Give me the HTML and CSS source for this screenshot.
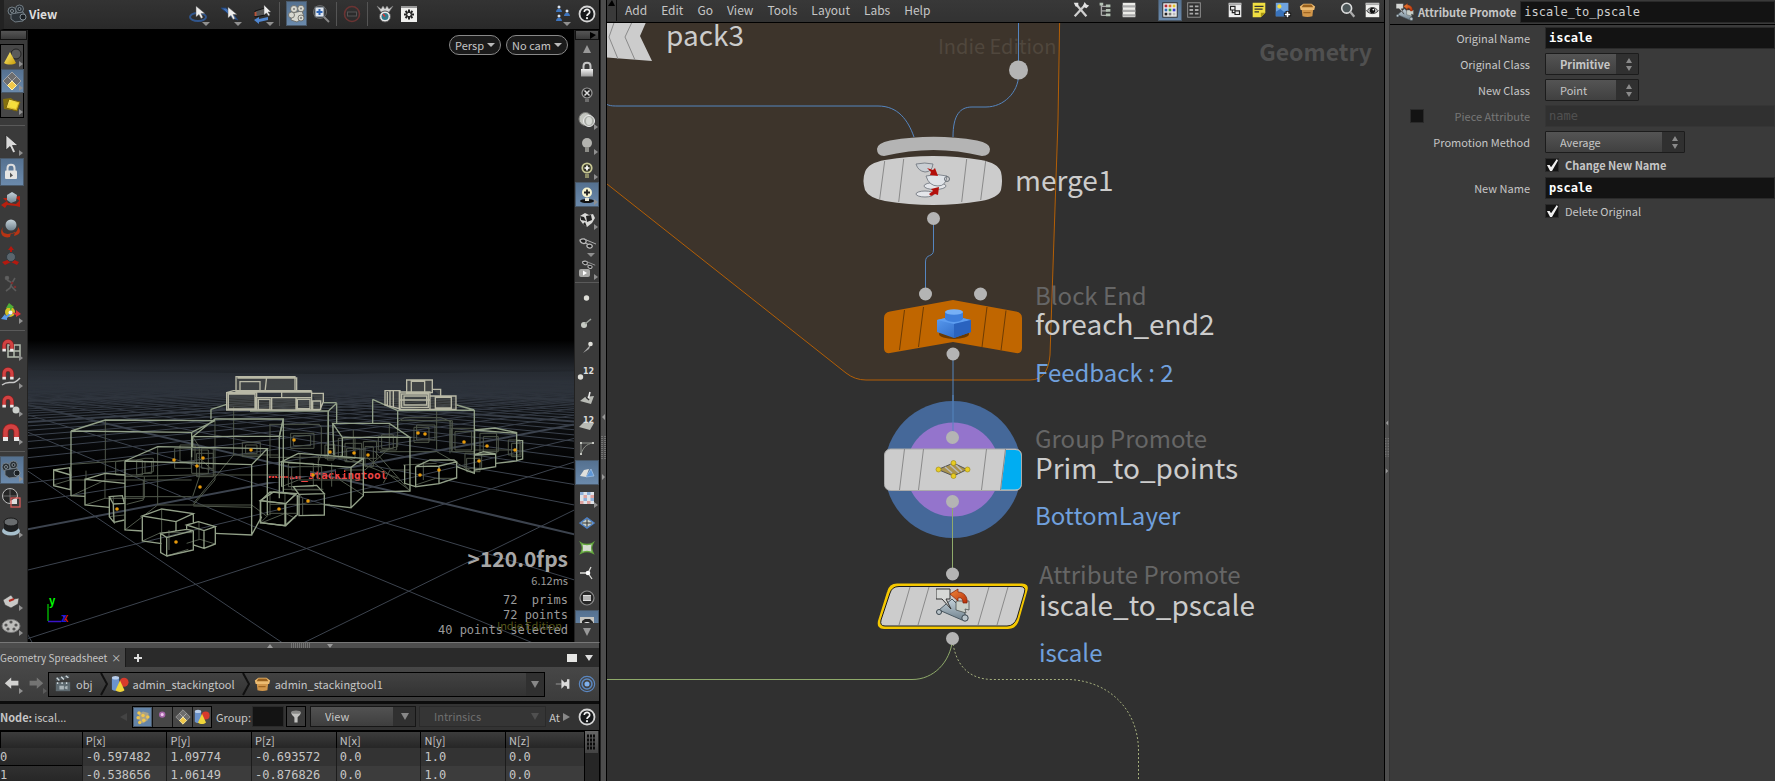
FILE: index.html
```html
<!DOCTYPE html>
<html lang="en">
<head>
<meta charset="utf-8">
<title>Geometry network</title>
<link rel="stylesheet" href="styles.css">
</head>
<body>
<svg class="defs" aria-hidden="true">
  <defs>
    <linearGradient id="gold" x1="0" y1="0" x2="1" y2="1"><stop offset="0" stop-color="#fff27a"/><stop offset="1" stop-color="#c79a08"/></linearGradient>
    <linearGradient id="silver" x1="0" y1="0" x2="0" y2="1"><stop offset="0" stop-color="#f2f2f2"/><stop offset="1" stop-color="#9a9a9a"/></linearGradient>
    <linearGradient id="steel" x1="0" y1="0" x2="0" y2="1"><stop offset="0" stop-color="#c5d2da"/><stop offset="1" stop-color="#70828e"/></linearGradient>
    <linearGradient id="brick" x1="0" y1="0" x2="1" y2="1"><stop offset="0" stop-color="#5b9cf0"/><stop offset="1" stop-color="#2560bd"/></linearGradient>
    <linearGradient id="flame" x1="0" y1="0" x2="1" y2="1"><stop offset="0" stop-color="#f08a3c"/><stop offset="1" stop-color="#b82e08"/></linearGradient>
  </defs>
  <symbol id="i-camera" viewBox="0 0 20 20"><g fill="#2a3137" stroke="#78838b" stroke-width=".9"><circle cx="5" cy="7" r="4"/><circle cx="12.500" cy="5" r="4"/><path d="M4 10l12-2 2 3-2 6-8 1-4-3z"/></g><g fill="#1a1f23" stroke="#98a3ab" stroke-width=".8"><circle cx="5" cy="7" r="1.500"/><circle cx="12.500" cy="5" r="1.500"/><circle cx="16" cy="13" r="3"/></g></symbol>
  <symbol id="i-tumble" viewBox="0 0 20 20"><ellipse cx="10" cy="13" rx="8" ry="4" fill="none" stroke="#31568d" stroke-width="2"/><path d="M8 2v11l3-2.500 2 4 2-1-2-4h4z" fill="#eee" stroke="#555" stroke-width=".5"/></symbol>
  <symbol id="i-pan" viewBox="0 0 20 20"><path d="M1 4l5 0 7 6 5 6-6-2-6-6z" fill="#3f70b8" stroke="#22406e"/><path d="M8 3v11l3-2.500 2 4 2-1-2-4h4z" fill="#eee" stroke="#555" stroke-width=".5"/></symbol>
  <symbol id="i-dolly" viewBox="0 0 20 20"><path d="M3 7l10-3v7l-10 2z" fill="#555" stroke="#111"/><path d="M3.500 8v4" stroke="#b8553a" stroke-width="2"/><path d="M2 16l5-3v2l9-2v3l-9 2v2z" fill="#4f86d0"/><path d="M12 1v10l2.500-2 2 3 1.500-1-2-3h3z" fill="#eee" stroke="#555" stroke-width=".5"/></symbol>
  <symbol id="i-reels" viewBox="0 0 20 20"><g fill="#d8d8d0" stroke="#65655f" stroke-width=".8"><path d="M5 9l10-2 2 6-7 5-6-2z"/><circle cx="7" cy="5" r="3.500"/><circle cx="14" cy="4.500" r="3.300"/><circle cx="4.500" cy="11" r="3"/><circle cx="14" cy="14" r="3"/></g><g fill="#777"><circle cx="7" cy="5" r="1"/><circle cx="14" cy="4.500" r="1"/><circle cx="14" cy="14" r="1"/></g></symbol>
  <symbol id="i-zoombox" viewBox="0 0 20 20"><rect x="4" y="3" width="9" height="10" fill="#dfe6ef" stroke="#56606b"/><path d="M8.500 5v6M5.500 8h6" stroke="#2f66b8" stroke-width="2"/><circle cx="9" cy="8" r="6.500" fill="none" stroke="#777" stroke-width=".8"/><path d="M13 13l5 5" stroke="#888" stroke-width="2"/></symbol>
  <symbol id="i-stop" viewBox="0 0 20 20"><circle cx="10" cy="10" r="7.500" fill="none" stroke="#6b3433" stroke-width="1.600"/><rect x="5.500" y="8" width="9" height="4" fill="#2b2b2b" stroke="#555"/></symbol>
  <symbol id="i-medal" viewBox="0 0 20 20"><path d="M2 2l4 3 2-3 2 3 2-3 2 3 4-3-4 6H6z" fill="#d5d5d5" stroke="#777" stroke-width=".6"/><circle cx="10" cy="12.500" r="5.500" fill="#e8e8e8" stroke="#555"/><circle cx="10" cy="12.500" r="3.500" fill="#347a8a"/><path d="M8 10l2 2.500" stroke="#d33" stroke-width="1.500"/></symbol>
  <symbol id="i-gearbox" viewBox="0 0 20 20"><rect x="2" y="2" width="16" height="16" fill="#f0f0ee"/><path d="M2 3h16" stroke="#999" stroke-width="2"/><path d="M10 5.500v10M5 10.500h10M6.500 7l7 7M13.500 7l-7 7" stroke="#222" stroke-width="2"/><circle cx="10" cy="10.500" r="2.200" fill="#f0f0ee" stroke="#222"/></symbol>
  <symbol id="i-people" viewBox="0 0 20 20"><g fill="#d9e3ef"><circle cx="6" cy="3" r="1.500"/><circle cx="6" cy="12" r="1.500"/><circle cx="14" cy="7" r="1.500"/></g><path d="M3 8c0-4.500 6-4.500 6 0zM3 17c0-4.500 6-4.500 6 0zM11 12c0-4.500 6-4.500 6 0z" fill="#3d74bd"/></symbol>
  <symbol id="i-help" viewBox="0 0 20 20"><circle cx="10" cy="10" r="7.500" fill="#16181a" stroke="#d5d5d5" stroke-width="1.800"/><path d="M7.300 8c0-3.600 5.600-3.400 5.400 0 0 2-2.700 2-2.700 4" fill="none" stroke="#eee" stroke-width="1.700"/><circle cx="10" cy="14.200" r="1.100" fill="#eee"/></symbol>

  <symbol id="i-cone" viewBox="0 0 20 20"><circle cx="14" cy="7" r="5" fill="#5a5a5a" stroke="#222"/><path d="M8 5l6 11c-3 2-9 2-12 0z" fill="url(#gold)"/></symbol>
  <symbol id="i-diamonds" viewBox="0 0 20 20"><g stroke="#b0b0b0" stroke-width=".8" fill="#6d6d6d"><path d="M10 1l4.500 4.500-4.500 4.500-4.500-4.500zM5.500 5.500l4.500 4.500-4.500 4.500L1 10zM14.500 5.500l4.500 4.500-4.500 4.500-4.500-4.500z"/></g><path d="M10 10l4.500 4.500L10 19l-4.500-4.500z" fill="#f0c84a" stroke="#fff3b0"/></symbol>
  <symbol id="i-slab" viewBox="0 0 20 20"><path d="M1 4l8-1 4 4-4 8-7-1z" fill="#84700f"/><path d="M7 4l11 3-3 9-11-3z" fill="url(#gold)" stroke="#7a6405"/><path d="M9 6l7 2-2 6-7-2z" fill="#f5de3c"/></symbol>
  <symbol id="i-arrow" viewBox="0 0 20 20"><path d="M5 1v15l4-3.500 3 6.500 2.500-1.200-3-6.300H17z" fill="#d9d9d9" stroke="#222" stroke-width=".7"/></symbol>
  <symbol id="i-lock" viewBox="0 0 20 20"><path d="M6.500 9V6c0-4.500 7-4.500 7 0v3" fill="none" stroke="#ddd" stroke-width="2"/><rect x="4" y="8.500" width="12" height="8.500" rx="1" fill="#e6e6e4"/><path d="M9 10.500v5l3-2z" fill="#555"/></symbol>
  <symbol id="i-move" viewBox="0 0 20 20"><path d="M0 15l6-4 1 2 8 1 4-4v7l-4-1-9-1-2 3zM2 8h5l-2 3zM13 7l6-1v5z" fill="#b8200f"/><path d="M6 5l5-3 5 3-1 6-5 2-4-3z" fill="url(#steel)"/></symbol>
  <symbol id="i-rotate" viewBox="0 0 20 20"><path d="M2 9c-3 7 5 8 8 6l-1 4c-6 2-12-3-7-10zM17 9c4 5 1 8-4 9l1-4-5 2c4 0 8-2 8-7z" fill="#b83414"/><circle cx="10" cy="7" r="5.500" fill="url(#steel)"/></symbol>
  <symbol id="i-scale" viewBox="0 0 20 20"><path d="M10 0l3 4h-2v9l7 3-2 3-6-3-6 3-3-3 8-3V4H7z" fill="#b3190f"/><circle cx="10" cy="11" r="4.500" fill="#59656d" stroke="#303a40"/></symbol>
  <symbol id="i-pose" viewBox="0 0 20 20"><g stroke="#5c5c5c" stroke-width="1.600" fill="#6a6a6a"><circle cx="6" cy="4" r="1.500"/><path d="M6 6l5 3 3-5M11 9l-2 5-4 3M10 12l5 5" fill="none"/></g><circle cx="11" cy="9" r="1.300" fill="#7c2f2f"/><circle cx="14" cy="13" r="1.300" fill="#7c2f2f"/></symbol>
  <symbol id="i-axes" viewBox="0 0 20 20"><circle cx="9" cy="10" r="5" fill="#d2c024"/><path d="M9 11V6H5l3-5 5 4-2 1z" fill="#4fae36"/><path d="M9 10l6 1V8l5 4-5 3v-2z" fill="#d8343a"/><path d="M10 10l-5 4-1-2-4 5 6 1v-2l5-4z" fill="#5c9ae8"/><circle cx="9.500" cy="10.500" r="2" fill="#f1f1f1"/></symbol>
  <symbol id="i-magnet" viewBox="0 0 20 20"><path d="M4.500 16V9c0-7.500 11-7.500 11 0v7" fill="none" stroke="#8e1c1c" stroke-width="6"/><path d="M4.500 14V9c0-7.500 11-7.500 11 0v5" fill="none" stroke="#d24242" stroke-width="4.500"/><path d="M2 14h5v4H2zM13 14h5v4h-5z" fill="#e9e9e9"/></symbol>
  <symbol id="i-maggrid" viewBox="0 0 20 20"><path d="M7 6h12v12H7zM7 12h12M13 6v12" fill="none" stroke="#b4bcae" stroke-width="1.500"/><use href="#i-magnet" width="14" height="14"/></symbol>
  <symbol id="i-magcurve" viewBox="0 0 20 20"><path d="M1 18c8-6 10 2 18-7" fill="none" stroke="#c8c8c8" stroke-width="1.500"/><use href="#i-magnet" width="14" height="14"/></symbol>
  <symbol id="i-magpoint" viewBox="0 0 20 20"><circle cx="15" cy="15" r="3.500" fill="#ccd0cc"/><use href="#i-magnet" width="14" height="14"/></symbol>
  <symbol id="i-globe" viewBox="0 0 20 20"><circle cx="9" cy="8" r="7.500" fill="#252525" stroke="#bbb"/><path d="M2 8h14M9 1v14" stroke="#888" stroke-width=".7"/><path d="M9 13l7-4v7H9z" fill="#ddd"/><rect x="10" y="10" width="9" height="9" fill="none" stroke="#d85a58" stroke-width="1.300"/></symbol>
  <symbol id="i-cylinder" viewBox="0 0 20 20"><ellipse cx="10" cy="15" rx="9" ry="4.500" fill="#a7bfcc"/><path d="M3 6v7c3 4 11 4 14 0V6z" fill="#1d1f20"/><ellipse cx="10" cy="6" rx="7" ry="4" fill="#686c6e" stroke="#1a1a1a"/></symbol>
  <symbol id="i-brush" viewBox="0 0 20 20"><path d="M2 9l8-5 3 4 5-1-1 6-7 4-6-3z" fill="#c8c8c6" stroke="#333" stroke-width=".6"/><path d="M8 10l5-2" stroke="#b02a20" stroke-width="2"/></symbol>
  <symbol id="i-reel" viewBox="0 0 20 20"><ellipse cx="10" cy="10" rx="9" ry="6.500" fill="#bdbdbb" stroke="#777"/><g fill="#555"><circle cx="10" cy="6" r="1.600"/><circle cx="5" cy="9" r="1.600"/><circle cx="15" cy="9" r="1.600"/><circle cx="7" cy="13" r="1.600"/><circle cx="13" cy="13" r="1.600"/></g></symbol>

  <symbol id="i-padlock" viewBox="0 0 20 20"><path d="M6.500 9V6c0-4.500 7-4.500 7 0v3" fill="none" stroke="#c5c5c5" stroke-width="2"/><rect x="4" y="9" width="12" height="7.500" fill="url(#silver)"/></symbol>
  <symbol id="i-bulboff" viewBox="0 0 20 20"><circle cx="10" cy="8" r="5" fill="#222" stroke="#999" stroke-width="1.200"/><path d="M7.500 5.500l5 5M12.500 5.500l-5 5" stroke="#ddd" stroke-width="1.500"/><path d="M8 14h4v3H8z" fill="#6d6d6d"/></symbol>
  <symbol id="i-discs" viewBox="0 0 20 20"><circle cx="8.500" cy="9" r="6.500" fill="#c3c5bf" stroke="#7e7e7b"/><circle cx="12" cy="11" r="5.500" fill="#a9aca6" stroke="#eee"/><ellipse cx="12" cy="11" rx="3" ry="4" fill="#d5d8d3"/></symbol>
  <symbol id="i-bulb" viewBox="0 0 20 20"><circle cx="10" cy="8" r="5" fill="#b3b3af"/><path d="M8 12h4v5H8z" fill="#8d8d88"/></symbol>
  <symbol id="i-bulbplus" viewBox="0 0 20 20"><circle cx="10" cy="8" r="4.700" fill="#333325" stroke="#c9c995" stroke-width="1.800"/><path d="M10 5.500v5M7.500 8h5" stroke="#fff" stroke-width="1.700"/><path d="M8 14h4v4H8z" fill="#8d8d66"/></symbol>
  <symbol id="i-bulblit" viewBox="0 0 20 20"><ellipse cx="10" cy="16" rx="7" ry="2" fill="#111"/><circle cx="10" cy="7.500" r="5" fill="#f6f3cf"/><path d="M10 4.500v6M7 7.500h6" stroke="#222" stroke-width="1.800"/><path d="M8 13h4v3H8z" fill="#e8e8d8"/></symbol>
  <symbol id="i-checks" viewBox="0 0 20 20"><path d="M3 6l5-3 4 2 4-1 2 4-3 5-5 4-4-3-3-4z" fill="#d9d9d7"/><path d="M3 6l4 1 2 4-5-1zM9 6l5-1 1 5-5 2zM8 12l2 5-4-3z" fill="#222"/></symbol>
  <symbol id="i-glasses" viewBox="0 0 20 20"><path d="M3 5c3-2 7-1 6 2s-6 1-6-2zM10 10c3-2 6 0 5 2s-6 1-5-2z" fill="#1d1d1d" stroke="#bdbdbd" stroke-width="1.300"/><path d="M7 4l12 5M8 8l3 1" stroke="#aaa"/></symbol>
  <symbol id="i-playglasses" viewBox="0 0 20 20"><use href="#i-glasses" x="3" y="-2" width="16" height="16"/><rect x="2" y="9" width="11" height="8" rx="2" fill="#a8a8a6"/><path d="M6 10.500v5l4-2.500z" fill="#fff"/></symbol>
  <symbol id="i-dot" viewBox="0 0 20 20"><circle cx="9.500" cy="10" r="2.700" fill="#deded8"/></symbol>
  <symbol id="i-normal" viewBox="0 0 20 20"><circle cx="7" cy="12" r="3" fill="#c7cbc4"/><path d="M8 11l6-5" stroke="#9aa09a" stroke-width="1.600"/></symbol>
  <symbol id="i-trail" viewBox="0 0 20 20"><path d="M14 6l-8 9 6-4z" fill="#aaa"/><circle cx="13.500" cy="6" r="2.300" fill="#e1e1db"/></symbol>
  <symbol id="i-poly" viewBox="0 0 20 20"><path d="M3 13l5-4 9-1-3 8z" fill="#b9bbb5"/><path d="M11 12l2-8" stroke="#eee" stroke-width="1.500"/><path d="M9 9l3 3" stroke="#333" stroke-width="1.500"/></symbol>
  <symbol id="i-corner" viewBox="0 0 20 20"><path d="M4 16V5h12M4 16C6 10 9 6 16 5" fill="none" stroke="#8f938c"/><path d="M3 4h2v2H3zM15 4h2v2h-2zM3 15h2v2H3z" fill="#c5c7c1"/></symbol>
  <symbol id="i-planes" viewBox="0 0 20 20"><path d="M3 13l4-6 5-1-3 8z" fill="#e0e0dc"/><path d="M9 14l5-8 3 7z" fill="#5e97d8" stroke="#b5d0ee" stroke-width=".6"/></symbol>
  <symbol id="i-checker" viewBox="0 0 20 20"><rect x="3" y="4" width="14" height="12" fill="#dfe3e8"/><path d="M3 4h3.500v3H3zM10 4h3.500v3H10zM6.500 10H10v3H6.500zM13.500 10H17v3h-3.500z" fill="#8fb0d8"/><path d="M6.500 7H10v3H6.500zM13.500 7H17v3h-3.500zM3 13h3.500v3H3zM10 13h3.500v3H10z" fill="#dfa3a0"/></symbol>
  <symbol id="i-plane" viewBox="0 0 20 20"><path d="M3 10l7-5 7 5-7 5z" fill="#c5cec8" stroke="#4d7fc2" stroke-width="1.500"/><path d="M10 6v8M5 10h10" stroke="#333"/></symbol>
  <symbol id="i-wrap" viewBox="0 0 20 20"><path d="M4 5c3 2 9 2 12 0-2 4-2 6 0 10-4-2-8-2-12 0 2-4 2-6 0-10z" fill="#d5dccf" stroke="#64a83e" stroke-width="1.500"/></symbol>
  <symbol id="i-tri" viewBox="0 0 20 20"><path d="M11 10l3-6M11 10H3M11 10l4 6" stroke="#dcdcd8" stroke-width="1.300"/><circle cx="11" cy="10" r="2.300" fill="#fff"/></symbol>
  <symbol id="i-list" viewBox="0 0 20 20"><circle cx="10" cy="10" r="7" fill="#262626" stroke="#8a8a8a" stroke-width="1.200"/><path d="M6 7h8v6H6z" fill="#ddd"/><path d="M6 9h8M6 11h8" stroke="#777" stroke-width=".8"/></symbol>
  <symbol id="i-display" viewBox="0 0 20 20"><rect x="3" y="4" width="14" height="13" fill="#c5c5c1"/><path d="M5 8l3-2h5l3 3v8H5z" fill="#252525"/><circle cx="10" cy="13" r="4" fill="#eee"/></symbol>

  <symbol id="i-tools" viewBox="0 0 20 20"><path d="M3 17L15 4M4 3l12 14" stroke="#cfcfcf" stroke-width="2.500"/><path d="M2 2h5v4H4zM14 1l2 3 3 1-3 3-4-2z" fill="#e2e2e2"/></symbol>
  <symbol id="i-tree" viewBox="0 0 20 20"><path d="M6 4v12M6 6h7M6 11h7M6 16h7" stroke="#aaa" stroke-width="1.500"/><path d="M4 2h4v3H4zM11 4h5v3h-5zM11 9h5v3h-5zM11 14h5v3h-5z" fill="#b4c2b4"/></symbol>
  <symbol id="i-sheet" viewBox="0 0 20 20"><rect x="3" y="2" width="14" height="16" fill="#ecece8"/><path d="M3 6h14M3 11h14M3 16h14" stroke="#aaa" stroke-width="2.500"/></symbol>
  <symbol id="i-palette" viewBox="0 0 20 20"><rect x="2" y="2" width="16" height="16" fill="#eee" stroke="#222"/><path d="M4 4h3v3H4z" fill="#b3283a"/><path d="M8.500 4h3v3h-3z" fill="#d96d28"/><path d="M13 4h3v3h-3z" fill="#e0c62c"/><path d="M4 8.500h3v3H4z" fill="#3169b4"/><path d="M8.500 8.500h3v3h-3z" fill="#3c9a3f"/><path d="M13 8.500h3v3h-3z" fill="#3a3ad0"/><path d="M4 13h3v3H4z" fill="#222"/><path d="M8.500 13h3v3h-3z" fill="#777"/><path d="M13 13h3v3h-3z" fill="#bbb"/></symbol>
  <symbol id="i-nodes" viewBox="0 0 20 20"><rect x="3" y="2" width="14" height="16" fill="#303030" stroke="#999"/><path d="M5 5h4v2H5zM11 5h4v2h-4zM5 9h4v2H5zM11 9h4v2h-4zM5 13h4v2H5zM11 13h4v2h-4z" fill="#aaa"/></symbol>
  <symbol id="i-netbox" viewBox="0 0 20 20"><rect x="3" y="2" width="14" height="16" fill="#eee"/><path d="M3 3.500h14" stroke="#aaa" stroke-width="2"/><path d="M5 6h5v4H5zM10 11h5v4h-5zM7 10v3h3" fill="none" stroke="#222" stroke-width="1.300"/></symbol>
  <symbol id="i-note" viewBox="0 0 20 20"><path d="M3 2h14v11l-5 5H3z" fill="#f0df42"/><path d="M12 18v-5h5z" fill="#a89512"/><path d="M5 6h10M5 9h9M5 12h5" stroke="#333" stroke-width="1.400"/></symbol>
  <symbol id="i-image" viewBox="0 0 20 20"><rect x="2" y="2" width="14" height="15" fill="#6fa4e0"/><path d="M2 17v-5l5-3 4 3 5-2v7z" fill="#3973bb"/><circle cx="6" cy="6" r="2.300" fill="#f2da42"/><path d="M15 11v8M11 15h8" stroke="#111" stroke-width="4"/><path d="M15 12v6M12 15h6" stroke="#fff" stroke-width="1.800"/></symbol>
  <symbol id="i-box" viewBox="0 0 20 20"><path d="M4 8h13l-1 9c-3 1-8 1-11 0z" fill="#d1964a"/><path d="M2 6l4-3h9l4 3-1 4H3z" fill="#edbc72"/><path d="M6 4h9l2 3H4z" fill="#98601d"/><path d="M6 13h8" stroke="#8b5414"/></symbol>
  <symbol id="i-search" viewBox="0 0 20 20"><circle cx="8.500" cy="8" r="5.500" fill="#4d5759" stroke="#ddd" stroke-width="1.800"/><path d="M12.500 12l4.500 5.500" stroke="#aaa" stroke-width="2.500"/></symbol>
  <symbol id="i-eye" viewBox="0 0 20 20"><rect x="3" y="2" width="15" height="16" fill="#f1f1ef"/><path d="M3 3.500h15" stroke="#aaa" stroke-width="2"/><path d="M4 11c4-5 9-5 13 0-4 4-9 4-13 0z" fill="#bbb" stroke="#333"/><circle cx="10.500" cy="10.500" r="3" fill="#111"/><circle cx="11.500" cy="9.500" r="1" fill="#fff"/></symbol>

  <symbol id="i-clapper" viewBox="0 0 20 20"><path d="M2 7l15-4V0L2 3z" fill="#4c565b"/><path d="M2 8h16v10H2z" fill="#5d696f"/><path d="M3 3l3 3M8 2l3 3M13 1l3 2M4 8v2M9 8v2M14 8v2" stroke="#d0d8dc" stroke-width="1.500"/><path d="M6 12h5v4H6zM12 13l3-1v4l-3-1z" fill="#aab4b8"/></symbol>
  <symbol id="i-shapes" viewBox="0 0 20 20"><path d="M1 3h8v13c-2 2-6 2-8 0z" fill="#6b93cc"/><ellipse cx="5" cy="3" rx="4" ry="2" fill="#b8cdea"/><circle cx="14.500" cy="8" r="5" fill="#d83a2c"/><path d="M10 6l5 11c-3 2.500-7 2.500-10 0z" fill="#f0d63a"/></symbol>
  <symbol id="i-back" viewBox="0 0 20 20"><path d="M1 9l8-7v4h9v6H9v4z" fill="#d2d2d0"/></symbol>
  <symbol id="i-pin" viewBox="0 0 20 20"><path d="M1 10h7" stroke="#888" stroke-width="1.500"/><path d="M8 4l4 4 3-1V4h3v12h-3v-3l-3-1-4 4z" fill="#dcdcdc"/></symbol>
  <symbol id="i-target" viewBox="0 0 20 20"><g fill="none" stroke="#5b87c0"><circle cx="10" cy="10" r="8.500" stroke-width="1.300"/><circle cx="10" cy="10" r="5.500" stroke-width="1.700"/></g><circle cx="10" cy="10" r="2.800" fill="#7fb0ec"/></symbol>
  <symbol id="i-points" viewBox="0 0 20 20"><path d="M5 6l5-3 7 2-1 9-6 4-5-4z" fill="#aaa289"/><g fill="#f1c64c"><circle cx="5" cy="5" r="2.200"/><circle cx="10" cy="8" r="2.200"/><circle cx="4" cy="11" r="2.200"/><circle cx="11" cy="14" r="2.200"/><circle cx="6" cy="17" r="2.200"/><circle cx="16" cy="10" r="2.200"/></g></symbol>
  <symbol id="i-vertex" viewBox="0 0 20 20"><circle cx="9" cy="7" r="3" fill="#efc8ee" stroke="#a464a8" stroke-width="2"/></symbol>
  <symbol id="i-funnel" viewBox="0 0 20 20"><path d="M4 4h12c0 4-4 5-4 7v6H8v-6c0-2-4-3-4-7z" fill="#c1c1bf"/><ellipse cx="10" cy="4" rx="6" ry="2" fill="#8a8a88"/></symbol>

  <symbol id="i-promote" viewBox="0 0 34 34"><path d="M3 22l13-11 12 12 2 6-4 3z" fill="url(#steel)" stroke="#4a5861"/><path d="M0 1h14v10h-4l5 10-9-10H0z" fill="#d6d8d6" stroke="#333"/><path d="M20 13h13v9l-4-1 1 4-10-3z" fill="#c9cfc9" stroke="#4c5250" stroke-width=".8"/><path d="M14 6l8-5v3c6 0 10 5 9 11h-4c0-4-2-6-5-5v3z" fill="url(#flame)" stroke="#7b1c05" stroke-width=".7"/><g fill="#b9c4ca" stroke="#3a464e"><circle cx="3" cy="24" r="2.500"/><circle cx="29" cy="30" r="3.200"/></g></symbol>
</svg>

<div class="workspace">
  <main class="left-pane">
    <header class="view-bar">
      <div class="brand"><svg class="ico"><use href="#i-camera"/></svg><h1>View</h1></div>
      <button class="tool wide more-down" aria-label="Tumble"><svg class="ico"><use href="#i-tumble"/></svg></button>
      <button class="tool wide more-down" aria-label="Pan"><svg class="ico"><use href="#i-pan"/></svg></button>
      <button class="tool wide more-down" aria-label="Dolly"><svg class="ico"><use href="#i-dolly"/></svg></button>
      <i class="vsep"></i>
      <button class="tool active" aria-label="Camera"><svg class="ico"><use href="#i-reels"/></svg></button>
      <button class="tool" aria-label="Zoom box"><svg class="ico"><use href="#i-zoombox"/></svg></button>
      <i class="vsep"></i>
      <button class="tool" aria-label="Stop"><svg class="ico"><use href="#i-stop"/></svg></button>
      <i class="vsep"></i>
      <button class="tool narrow first" aria-label="Snapshot"><svg class="ico"><use href="#i-medal"/></svg></button>
      <button class="tool narrow" aria-label="Options"><svg class="ico"><use href="#i-gearbox"/></svg></button>
      <div class="grow"></div>
      <button class="tool narrow more-down" aria-label="Links"><svg class="ico"><use href="#i-people"/></svg></button>
      <button class="tool narrow" aria-label="Help"><svg class="ico"><use href="#i-help"/></svg></button>
    </header>

    <section class="scene">
      <nav class="tools tools-left" aria-label="Tools">
        <div class="grip"></div>
        <div class="stack">
          <button class="tool more" aria-label="Objects"><svg class="ico"><use href="#i-cone"/></svg></button>
          <button class="tool more active" aria-label="Components"><svg class="ico"><use href="#i-diamonds"/></svg></button>
          <button class="tool more" aria-label="Geometry"><svg class="ico"><use href="#i-slab"/></svg></button>
        </div>
        <hr>
        <button class="tool more" aria-label="Select"><svg class="ico"><use href="#i-arrow"/></svg></button>
        <button class="tool active" aria-label="Secure selection"><svg class="ico"><use href="#i-lock"/></svg></button>
        <button class="tool" aria-label="Move"><svg class="ico"><use href="#i-move"/></svg></button>
        <button class="tool" aria-label="Rotate"><svg class="ico"><use href="#i-rotate"/></svg></button>
        <button class="tool" aria-label="Scale"><svg class="ico"><use href="#i-scale"/></svg></button>
        <button class="tool" aria-label="Pose"><svg class="ico"><use href="#i-pose"/></svg></button>
        <button class="tool more" aria-label="Handles"><svg class="ico"><use href="#i-axes"/></svg></button>
        <hr>
        <button class="tool more" aria-label="Snap to grid"><svg class="ico"><use href="#i-maggrid"/></svg></button>
        <button class="tool more" aria-label="Snap to curve"><svg class="ico"><use href="#i-magcurve"/></svg></button>
        <button class="tool more" aria-label="Snap to point"><svg class="ico"><use href="#i-magpoint"/></svg></button>
        <button class="tool more" aria-label="Snap"><svg class="ico"><use href="#i-magnet"/></svg></button>
        <hr>
        <button class="tool more active" aria-label="View tool"><svg class="ico"><use href="#i-camera"/></svg></button>
        <button class="tool" aria-label="Render region"><svg class="ico"><use href="#i-globe"/></svg></button>
        <button class="tool more" aria-label="Lens"><svg class="ico"><use href="#i-cylinder"/></svg></button>
        <div class="grow"></div>
        <button class="tool more short" aria-label="Flipbook"><svg class="ico"><use href="#i-brush"/></svg></button>
        <button class="tool more short" aria-label="Render"><svg class="ico"><use href="#i-reel"/></svg></button>
      </nav>

      <div class="viewport">
        <svg class="canvas" role="img" aria-label="Wireframe scene">
          <defs>
            <linearGradient id="haze" x1="0" y1="0" x2="0" y2="1"><stop offset="0" stop-color="#000"/><stop offset=".22" stop-color="#23272d"/><stop offset=".4" stop-color="#15181c"/><stop offset="1" stop-color="#000"/></linearGradient>
            <linearGradient id="fade" gradientUnits="userSpaceOnUse" x1="0" y1="340" x2="0" y2="640"><stop offset=".09" stop-color="#111"/><stop offset=".14" stop-color="#888"/><stop offset=".3" stop-color="#fff"/></linearGradient>
            <mask id="fademask" maskUnits="userSpaceOnUse" x="0" y="340" width="3000" height="2000"><rect x="0" y="340" width="3000" height="2000" fill="url(#fade)"/></mask>
          </defs>
          <g transform="translate(-28 -30)">
            <rect class="haze" x="0" y="340" width="3000" height="130"/>
            <g mask="url(#fademask)"><path id="floor" class="floor"/><path id="floor-major" class="floor major"/></g>
            <text class="tag mono" x="268" y="479">admin_stackingtool</text>
            <path d="M266 468h44v8h-44zM266 478h24v4h-24zM336 469h8v5h-8z"/>
            <g class="inner" transform="translate(45 370) scale(.3333)">
              <path d="M181 150V330M78 378L181 330H440M566 110V255L445 400M566 255H700M510 148V330L445 405M338 230V405L240 480M338 405H620L667 440M240 320L440 315H706M445 408L620 412M78 283L240 272M440 380H240"/>
              <path d="M212 275l30-5h50v45h-80zM275 270l25-5h25v40l-50 10zM300 275h20v35h-20zM389 235h50v60h-50zM405 225h45v50h-45zM440 240h50v70h-50zM455 250h50v70h-50zM470 235h35v60h-35zM592 217h54v43h-54zM602 225h34v26h-34zM443 200l20 30v90l-20 60M460 262l45 40"/>
              <path d="M295 330v60l-50 13M120 405l60-20h115M180 310v75M298 320v65M25 345l50-15h48v-28M74 293v38M292 513l55-25h95M350 417v70M365 558l65-20M372 480v60M425 520l40-12 46 14M462 455v55M193 440l45-5M205 378v60M646 460l75-30 30 15M720 366v65"/>
            </g>
            <g class="inner" transform="translate(250 370) scale(.3333)">
              <path d="M58 163h150l6 10v80l-10 25M60 163v100M122 190h70v45h-70zM130 197h52v30h-52zM233 125v130M58 262h250M250 160v95M418 160v75L345 300h-60M310 180v60M443 125v105L390 245H560L672 308M560 122v118M675 240h120M600 180v50"/>
              <path d="M443 155l20-12h110l30 12v78M452 152h155v90M492 172h45v45h-45zM500 165h55v45h-55zM605 175h70v70h-70zM615 185h50v55h-50zM600 150v100M690 190h50v60h-50zM700 200h45v45h-45zM775 210h35v45h-35zM785 220h28v40h-28z"/>
              <path d="M265 205h50v60h-50zM285 220h50v55h-50zM290 235h40v40h-40zM340 215h40v50h-40zM345 230h25v60h-25zM385 200h55v40h-55zM395 195h35v40h-35zM225 225h30v40h-30zM232 235h20v35h-20zM375 245l105 118M350 262l130 100M270 255l175 70M480 300h-60l-20 40"/>
              <path d="M115 280h75v70h-75zM125 290h90v70h-90zM95 350l50-20h195M150 250v80M205 258v70M340 375l-70-45M100 358h120M245 280v70M460 285l100-5M497 345l60-20h64M520 275v55M645 250h50v45h-50zM650 265h40v40h-40zM60 403h180M128 350l30 35v50M30 460l30-30h80M60 366v70"/>
            </g>
            <g class="wire" transform="translate(45 370) scale(.3333)">
              <path d="M78 183L181 150L510 152L440 187ZM78 183V377L120 379M440 187V262M443 200L510 147H715L703 199ZM443 200V235M703 199V385M715 147V370M240 273L338 230L667 236L620 284ZM240 273V480L292 483M620 284V495L510 490M667 236V435M620 495L650 440M498 118V148M498 118L545 103"/>
              <path d="M26 300L74 293L77 315L26 300V347L76 359V315M120 328L180 310L240 315M240 340L120 328V405L193 412M193 380L232 377L238 400L205 402ZM193 380V440L207 457L205 402M207 457L238 450"/>
              <path d="M292 438L350 417L445 431L393 455ZM292 438V513L350 521M393 455V485M445 431V460M347 490L425 478L445 482L365 503ZM347 490V548L365 558V503M365 558L445 540V482M425 465L460 455L511 470L477 482ZM425 465V478M477 482V535L445 525M511 470V522L477 535M646 392L686 366L752 373L722 401ZM646 392V458L720 467V401M720 467L755 435"/>
            </g>
            <g class="wire" transform="translate(250 370) scale(.3333)">
              <path d="M95 200H88L100 147M0 123H235L260 100M235 123V255M260 100V160M220 98H260M248 160H418L480 202H277ZM277 202V260M480 202V363L340 367M248 160L252 255M368 88L443 122L673 120L620 105M368 88V160M443 122V180M673 120V310L620 290"/>
              <path d="M95 275L145 250L340 265L303 292ZM95 275V350M303 292V413L223 404M340 265V377L303 413M32 392L60 366L140 371L107 401ZM32 392V458L107 467V401M107 467L142 434V375M130 350L200 346L223 371L147 373ZM147 373V437L223 435V371"/>
              <path d="M497 290L540 270H612L620 276L567 288ZM497 290V350L567 341V288M567 341L620 323V276M673 180L735 174L800 188V273L738 280M673 180L800 190M673 255L737 252L700 245ZM737 252V290L675 300M800 212H818V267L800 272M464 285V340L497 350"/>
            </g>
            <g class="wire top" transform="translate(250 370) scale(.3333)">
              <path d="M-42 20H50L45 66H-42ZM-38 24H140V66M50 20H135V66H45ZM-70 68H20V120H-70ZM-65 72H15V117H-65ZM-70 68L-50 62H185M18 83H65V120H18ZM25 88H60V118H25ZM65 83H138V120H65ZM95 66V83H185V66ZM138 83H185V120H138ZM142 88H180V116H142ZM185 70H220V95L210 120M188 93H212V118H188ZM-30 35H30V64H-30ZM-70 120H210"/>
              <path d="M470 30H547V68H470ZM484 34H524V68H484ZM405 62H450V117L405 105ZM412 66V108M420 62V112M430 62V114M448 66H540V118H448ZM455 72H535V112H455ZM462 78H530V105H462ZM540 78H618V118H540ZM556 82H604V114H556ZM548 58H572V78M448 90H540"/>
            </g>
            <g class="selected" id="selected"></g>
            <path d="M48 621v-17" stroke="#0f0"/><path d="M48 621.500h13" stroke="#3a14c8" stroke-width="1.500"/>
            <text class="axis" x="49" y="605" fill="#0f0">y</text><text class="axis" x="62" y="622" fill="#e01818">x</text><text class="axis" x="61" y="622" fill="#1818d8">z</text>
          </g>
        </svg>
        <div class="cams">
          <button class="pill">Persp<span class="caret"></span></button>
          <button class="pill">No cam<span class="caret"></span></button>
        </div>
        <div class="stats">
          <strong>&gt;120.0fps</strong>
          <span>6.12ms</span>
          <pre class="mono">72  prims
72 points
40 points selected</pre>
          <em>Indie Edition</em>
        </div>
      </div>

      <nav class="tools tools-right" aria-label="Display options">
        <div class="grip"><svg class="tri"><path d="M2 1v7l6-4z"/></svg></div>
        <button class="scroll" aria-label="Scroll up"><svg class="tri"><path d="M1 9L5 1L9 9z"/></svg></button>
        <button class="tool" aria-label="Lock"><svg class="ico"><use href="#i-padlock"/></svg></button>
        <button class="tool" aria-label="No lights"><svg class="ico"><use href="#i-bulboff"/></svg></button>
        <button class="tool more" aria-label="Headlight"><svg class="ico"><use href="#i-discs"/></svg></button>
        <button class="tool more" aria-label="Normal lights"><svg class="ico"><use href="#i-bulb"/></svg></button>
        <button class="tool more" aria-label="High quality"><svg class="ico"><use href="#i-bulbplus"/></svg></button>
        <button class="tool more active" aria-label="Shadows"><svg class="ico"><use href="#i-bulblit"/></svg></button>
        <button class="tool more" aria-label="Materials"><svg class="ico"><use href="#i-checks"/></svg></button>
        <button class="tool more-down" aria-label="Visibility"><svg class="ico"><use href="#i-glasses"/></svg></button>
        <button class="tool more" aria-label="Playback"><svg class="ico"><use href="#i-playglasses"/></svg></button>
        <hr>
        <button class="tool" aria-label="Points"><svg class="ico"><use href="#i-dot"/></svg></button>
        <button class="tool" aria-label="Point normals"><svg class="ico"><use href="#i-normal"/></svg></button>
        <button class="tool" aria-label="Point trails"><svg class="ico"><use href="#i-trail"/></svg></button>
        <button class="tool" aria-label="Point numbers"><svg class="ico"><use href="#i-dot" x="-6" y="4" width="20" height="20"/><text x="6" y="11">12</text></svg></button>
        <button class="tool" aria-label="Primitive normals"><svg class="ico"><use href="#i-poly"/></svg></button>
        <button class="tool" aria-label="Primitive numbers"><svg class="ico"><path d="M2 14l5-5 10 1-4 7z" fill="#b9bbb5"/><text x="6" y="10">12</text></svg></button>
        <button class="tool" aria-label="Hulls"><svg class="ico"><use href="#i-corner"/></svg></button>
        <button class="tool active" aria-label="Shading"><svg class="ico"><use href="#i-planes"/></svg></button>
        <button class="tool more" aria-label="Texture"><svg class="ico"><use href="#i-checker"/></svg></button>
        <button class="tool" aria-label="Grid"><svg class="ico"><use href="#i-plane"/></svg></button>
        <button class="tool" aria-label="Group"><svg class="ico"><use href="#i-wrap"/></svg></button>
        <button class="tool" aria-label="Vectors"><svg class="ico"><use href="#i-tri"/></svg></button>
        <button class="tool" aria-label="List"><svg class="ico"><use href="#i-list"/></svg></button>
        <div class="clip"><button class="tool active" aria-label="Display"><svg class="ico"><use href="#i-display"/></svg></button></div>
        <button class="scroll" aria-label="Scroll down"><svg class="tri"><path d="M1 1L5 9L9 1z"/></svg></button>
      </nav>
    </section>

    <div class="hsplit"><svg viewBox="0 0 70 6"><path d="M2 5l3-4 3 4zM62 1l3 4 3-4z"/><path class="dots" d="M26 1h20M26 3h20M26 5h20"/></svg></div>

    <section class="sheet">
      <div class="tabs">
        <button class="tab">Geometry Spreadsheet<span>×</span></button>
        <button class="plus" aria-label="New tab"><svg><path d="M5 1v8M1 5h8"/></svg></button>
        <div class="grow"></div>
        <svg class="winctl"><path d="M1 3h10v8H1z" fill="#e6e6e4"/><path d="M19 4h8l-4 6z" fill="#ddd"/></svg>
      </div>
      <div class="pathbar">
        <button class="tool narrow more" aria-label="Back"><svg class="ico"><use href="#i-back"/></svg></button>
        <button class="tool narrow more dim" aria-label="Forward"><svg class="ico flip"><use href="#i-back"/></svg></button>
        <div class="path">
          <a href="#obj"><svg class="ico"><use href="#i-clapper"/></svg>obj</a>
          <svg class="chev"><path d="M1 0l6 11-6 11"/></svg>
          <a href="#tool"><svg class="ico"><use href="#i-shapes"/></svg>admin_stackingtool</a>
          <svg class="chev"><path d="M1 0l6 11-6 11"/></svg>
          <a href="#tool1"><svg class="ico"><use href="#i-box"/></svg>admin_stackingtool1</a>
          <div class="grow"></div>
          <button class="drop" aria-label="Recent paths"><span class="caret"></span></button>
        </div>
        <button class="tool narrow" aria-label="Pin"><svg class="ico"><use href="#i-pin"/></svg></button>
        <button class="tool narrow" aria-label="Follow"><svg class="ico"><use href="#i-target"/></svg></button>
      </div>
      <div class="filter">
        <div class="node"><b>Node:</b>iscal...</div>
        <svg class="prev"><path d="M8 1v8L1 5z"/></svg>
        <div class="modes">
          <button class="tool active" aria-label="Points"><svg class="ico"><use href="#i-points"/></svg></button>
          <button class="tool" aria-label="Vertices"><svg class="ico"><use href="#i-vertex"/></svg></button>
          <button class="tool" aria-label="Primitives"><svg class="ico"><use href="#i-diamonds"/></svg></button>
          <button class="tool" aria-label="Detail"><svg class="ico"><use href="#i-shapes"/></svg></button>
        </div>
        <label for="group">Group:</label><input id="group" class="field">
        <button class="tool funnel" aria-label="Filter"><svg class="ico"><use href="#i-funnel"/></svg></button>
        <div class="combo"><select aria-label="View"><option>View</option></select><span class="caret"></span></div>
        <div class="combo off"><select aria-label="Intrinsics" disabled><option>Intrinsics</option></select><span class="caret"></span></div>
        <span class="cut">At</span>
        <svg class="next"><path d="M1 1v8l7-4z"/></svg>
        <button class="tool narrow" aria-label="Help"><svg class="ico"><use href="#i-help"/></svg></button>
      </div>
      <div class="grid">
        <table>
          <thead><tr><th class="index"></th><th>P[x]</th><th>P[y]</th><th>P[z]</th><th>N[x]</th><th>N[y]</th><th class="last">N[z]</th></tr></thead>
          <tbody class="mono">
            <tr><th>0</th><td>-0.597482</td><td>1.09774</td><td>-0.693572</td><td>0.0</td><td>1.0</td><td>0.0</td></tr>
            <tr><th>1</th><td>-0.538656</td><td>1.06149</td><td>-0.876826</td><td>0.0</td><td>1.0</td><td>0.0</td></tr>
          </tbody>
        </table>
        <div class="bar"><svg><path d="M2 5h9M2 9h9M2 13h9M2 17h9"/></svg></div>
      </div>
    </section>
  </main>

  <div class="vsplit"><svg viewBox="0 0 5 70"><path d="M4 2v6L1 5zM1 62v6l3-3z"/><path class="dots" d="M1 24v24M4 24v24"/></svg></div>

  <section class="network">
    <header class="menu-bar">
      <div class="handle"><svg class="tri"><path d="M1 7l4-6 3 6z"/></svg></div>
      <nav>
        <button>Add</button><button>Edit</button><button>Go</button><button>View</button><button>Tools</button><button>Layout</button><button>Labs</button><button>Help</button>
      </nav>
      <div class="grow"></div>
      <div class="icons">
        <button class="tool" aria-label="Preferences"><svg class="ico"><use href="#i-tools"/></svg></button>
        <button class="tool" aria-label="Tree"><svg class="ico"><use href="#i-tree"/></svg></button>
        <button class="tool" aria-label="List"><svg class="ico"><use href="#i-sheet"/></svg></button>
      </div>
      <div class="icons">
        <button class="tool active" aria-label="Palette"><svg class="ico"><use href="#i-palette"/></svg></button>
        <button class="tool" aria-label="Shapes"><svg class="ico"><use href="#i-nodes"/></svg></button>
      </div>
      <div class="icons">
        <button class="tool" aria-label="Network box"><svg class="ico"><use href="#i-netbox"/></svg></button>
        <button class="tool" aria-label="Sticky note"><svg class="ico"><use href="#i-note"/></svg></button>
        <button class="tool" aria-label="Image"><svg class="ico"><use href="#i-image"/></svg></button>
        <button class="tool" aria-label="Asset"><svg class="ico"><use href="#i-box"/></svg></button>
      </div>
      <div class="icons">
        <button class="tool" aria-label="Search"><svg class="ico"><use href="#i-search"/></svg></button>
        <button class="tool" aria-label="Visibility"><svg class="ico"><use href="#i-eye"/></svg></button>
      </div>
    </header>
    <div class="graph">
      <svg class="canvas">
        <g transform="translate(-607 -23)">
          <path class="block" d="M600 0H1060L1058 120L1050 355Q1048 380 1030 380H866Q855 380 846 373L607 184L590 172V0Z"/>
          <text class="mark" x="938" y="54">Indie Edition</text>
          <g class="link">
            <path d="M600 98C606 106 610 106 618 106H878C898 106 908 120 914 137"/>
            <path d="M1018.500 0V76C1018 92 1004 107 986 107H972C960 107 953 115 953 137"/>
            <path d="M933.500 219V250C933.500 258 925.500 253 925.500 262V294"/>
            <path d="M953 354V437"/>
          </g>
          <path class="face" d="M600 20H647L640 36L652 61L600 57Z"/>
          <path class="rib" d="M615 20L609 37L618 59M633 20L625 37L635 60"/>
          <circle class="port" cx="1018.500" cy="70" r="9.500"/>

          <path class="port" d="M884 156Q877 156 877 149Q877 143 890 140.500Q934 133 977 140.500Q990 143 990 149Q990 156 982 156Q934 144 884 156Z"/>
          <path class="face" d="M885 160Q933 152 981 160Q998 163 1001 172Q1003 180 1001 190Q998 198 981 201Q933 209 885 201Q869 198 865 190Q862 180 865 172Q868 163 885 160Z"/>
          <path class="rib" d="M884.700 161l-5 38M903.700 159l-5 43M966.700 159l-5 43M985.700 161l-5 39"/>
          <g>
            <path d="M916 164q9-2 17 0-1 8-8 8-7-1-9-8z" fill="#c9ced3" stroke="#697078" stroke-width=".8"/>
            <ellipse cx="935" cy="186" rx="11" ry="3.500" fill="#e4e6ea" stroke="#697078" stroke-width=".8"/>
            <path d="M926 176q11-3 21 0-1 10-9 10-9 0-12-10z" fill="#dfe3e8" stroke="#697078" stroke-width=".8"/><circle cx="947" cy="179" r="2.500" fill="none" stroke="#697078"/>
            <ellipse cx="925" cy="194" rx="9" ry="3" fill="#e4e6ea" stroke="#697078" stroke-width=".8"/>
            <path d="M927 168l6 2 2-2 3 8-8-1 1-3zM929 194l4-3-2-2 8-2-1 8-3-1-4 2z" fill="#b3100c"/>
          </g>
          <circle class="port" cx="933.500" cy="218.500" r="6.500"/>

          <circle class="port" cx="925.500" cy="294" r="6.500"/><circle class="port" cx="980.500" cy="294" r="6.500"/>
          <path class="end" d="M890 311.500L953 300L1016 311.500Q1022 312.500 1022 318V348Q1022 354 1016 353L953 342L890 353Q884 354 884 348V318Q884 312.500 890 311.500Z"/>
          <path class="rib dark" d="M904.500 310l-5 40M923.500 307l-5 40M987 307l-5 40M1006 310.500l-5 40"/>
          <ellipse cx="954" cy="334" rx="15" ry="5" fill="#6b3a00"/><path d="M937 320l17-4 17 4v12l-17 6-17-6z" fill="url(#brick)"/><path d="M937 320l17-4 17 4-17 4z" fill="#5d9df0"/><path d="M954 324v14l17-6v-12z" fill="#2a63bf"/><path d="M945 312v7c3 4 15 4 18 0v-7z" fill="#3d7edb"/><ellipse cx="954" cy="312" rx="9" ry="2.800" fill="#76b0f6"/>
          <circle class="port" cx="953" cy="354" r="6.500"/>

          <circle cx="953" cy="469.500" r="68.500" fill="#456899"/><circle cx="953" cy="469.500" r="47" fill="#9474cc"/>
          <path class="link" d="M953 395V437"/><path class="link sel" d="M952.500 502V574"/>
          <rect class="face edge" x="884.500" y="449" width="137" height="41.500" rx="6"/>
          <path d="M1006 450H1015Q1021 450 1021 456V484Q1021 489.500 1015 489.500H1001Z" fill="#00adf2"/>
          <path class="rib" d="M904.500 449l-5 41M923.500 449l-5 41M986.500 449l-5 41M1005.500 449l-5 41"/>
          <path d="M938 469.500l15.500-6.500 13.500 6.500-13.500 6.500z" fill="#a8924e" stroke="#555"/><path d="M945 467l7 6M950 465l9 8M956 465l6 6" stroke="#bbb" stroke-width="1.500"/><g fill="#e8cd22" stroke="#9a8510" stroke-width=".6"><circle cx="938.500" cy="469.500" r="2.500"/><circle cx="967.500" cy="469.500" r="2.500"/><circle cx="953.500" cy="463" r="2.500"/><circle cx="953.500" cy="476" r="2.500"/></g>
          <circle class="port" cx="952.500" cy="437.500" r="6.500"/><circle class="port" cx="952.500" cy="501.500" r="6.500"/>

          <circle class="port" cx="952.500" cy="574" r="6.500"/>
          <path class="picked" d="M897 584.500H1022Q1028 584.500 1026.500 590L1018 620Q1015.500 628 1008 628H884Q877.500 628 879 621L888 592Q890 584.500 897 584.500Z"/>
          <path class="inset" d="M899 586.500H1020Q1026 586.500 1024.500 592L1017 618Q1014 626 1007 626H885Q879.500 626 881 620L890 593Q892 586.500 899 586.500Z"/>
          <path class="rib" d="M910 587l-11 38M929 587l-11 38M989 587l-11 38M1008 587l-11 38"/>
          <use href="#i-promote" x="936" y="588" width="34" height="34"/>
          <path class="link sel" d="M952.500 640C950 662 934 679.500 912 679.500H600"/>
          <path class="link sel dash" d="M952.500 640C955 662 966 679.500 993 679.500H1070C1112 682 1138 712 1138.500 750V1200"/>
          <circle class="port" cx="952.500" cy="638.500" r="6.500"/>

          <g class="name"><text x="666" y="46">pack3</text><text x="1015" y="191">merge1</text><text x="1035" y="335">foreach_end2</text><text x="1035" y="479">Prim_to_points</text><text x="1039" y="616">iscale_to_pscale</text></g>
          <g class="kind"><text x="1035" y="305">Block End</text><text x="1035" y="448">Group Promote</text><text x="1039" y="584">Attribute Promote</text></g>
          <g class="info"><text x="1035" y="382">Feedback : 2</text><text x="1035" y="525">BottomLayer</text><text x="1039" y="662">iscale</text></g>
        </g>
      </svg>
      <div class="context">Geometry</div>
    </div>
  </section>

  <div class="vsplit dark"><svg viewBox="0 0 5 70"><path d="M4 2v6L1 5zM1 62v6l3-3z"/><path class="dots" d="M1 24v24M4 24v24"/></svg></div>

  <form class="params">
    <header>
      <svg class="ico"><use href="#i-promote"/></svg><h2>Attribute Promote</h2>
      <input class="field mono" aria-label="Node name" value="iscale_to_pscale">
    </header>
    <div class="row"><label for="p1">Original Name</label><input id="p1" class="field mono changed" value="iscale"></div>
    <div class="row"><label for="p2">Original Class</label><div class="pick"><select id="p2" class="changed"><option>Primitive</option></select><svg class="spin"><path d="M1 6l3-5 3 5zM1 9l3 5 3-5z"/></svg></div></div>
    <div class="row"><label for="p3">New Class</label><div class="pick"><select id="p3"><option>Point</option></select><svg class="spin"><path d="M1 6l3-5 3 5zM1 9l3 5 3-5z"/></svg></div></div>
    <div class="row off"><input type="checkbox" class="check" aria-label="Use piece attribute"><label for="p4">Piece Attribute</label><input id="p4" class="field mono" value="name" disabled></div>
    <div class="row"><label for="p5">Promotion Method</label><div class="pick long"><select id="p5"><option>Average</option></select><svg class="spin"><path d="M1 6l3-5 3 5zM1 9l3 5 3-5z"/></svg></div></div>
    <div class="row tick"><input type="checkbox" class="check" id="p6" checked><label for="p6" class="changed">Change New Name</label></div>
    <div class="row"><label for="p7">New Name</label><input id="p7" class="field mono changed" value="pscale"></div>
    <div class="row tick"><input type="checkbox" class="check" id="p8" checked><label for="p8">Delete Original</label></div>
  </form>
</div>
<script src="scene.js"></script>
</body>
</html>
```
FILE: styles.css
```css
* { box-sizing: border-box; }
html, body { height: 100%; margin: 0; background: #303030; overflow: hidden; }
body, button, input, select { font-family: "Noto Sans CJK SC", "Noto Sans", sans-serif; font-size: 11px; color: #c6c6c6; }
button { margin: 0; padding: 0; border: 0; background: none; }
h1, h2, hr, pre { margin: 0; }
a { color: inherit; text-decoration: none; }
.mono { font-family: "DejaVu Sans Mono", monospace; font-size: 12px; }
.defs { position: absolute; width: 0; height: 0; }
.grow { flex: 1; }
.ico { width: 20px; height: 20px; flex: none; display: block; }
.ico text { font: bold 8px "DejaVu Sans", sans-serif; fill: #ddd; }
.caret { width: 0; height: 0; border: 4px solid transparent; border-top-color: #bbb; border-bottom: 0; }

.workspace { height: 100vh; display: grid; grid-template-columns: minmax(0, 600fr) 7px minmax(0, 777fr) 6px minmax(0, 385fr); }
.left-pane { display: flex; flex-direction: column; min-height: 0; background: #303030; }

/* tool buttons */
.tool { position: relative; display: flex; align-items: center; justify-content: center; width: 28px; height: 24px; flex: none; }
.tool.wide { width: 32px; }
.tool.narrow { width: 24px; }
.tool.active { background: linear-gradient(#54708f, #6c8bad); box-shadow: inset 0 0 0 1px #4a5a6b; }
.tool.more::after, .tool.more-down::after { content: ""; position: absolute; right: 1px; bottom: 2px; border: 3px solid transparent; border-left: 4px solid #909090; border-right: 0; }
.tool.more-down::after { border: 4px solid transparent; border-top-color: #909090; border-bottom: 0; right: 4px; bottom: 0; }

/* viewport header */
.view-bar { display: flex; align-items: center; height: 30px; flex: none; padding-bottom: 2px; background: linear-gradient(#333, #292929); border-bottom: 1px solid #000; border-left: 4px solid #222; border-right: 1px solid #000; }
.brand { display: flex; align-items: center; gap: 2px; padding-left: 3px; width: 178px; }
h1 { font-size: 12px; line-height: 18px; color: #ddd; }
.view-bar .active { width: 21px; margin-left: 5px; }
.view-bar .tool { height: 25px; }
.view-bar .first { margin-left: 4px; }
.vsep { width: 1px; height: 24px; margin: 0 1px; background: #555; }

/* scene */
.scene { display: flex; flex: 1; min-height: 0; }
.tools { display: flex; flex-direction: column; flex: none; background: #3a3a3a; overflow: hidden; }
.tools-left { width: 28px; border-right: 1px solid #222; padding-bottom: 4px; }
.tools-right { width: 26px; border-right: 1px solid #000; border-left: 1px solid #222; }
.grip { height: 10px; flex: none; display: flex; justify-content: flex-end; background: linear-gradient(#555, #3a3a3a); border: 1px solid #111; }
.grip .tri, .handle .tri { fill: #000; }
.tools hr { border: 0; height: 1px; margin: 4px 2px 4px 0; background: #5a5a5a; flex: none; }
.tools-left .tool { width: 24px; height: 28px; flex: 0 1 28px; }
.tools-left .tool .ico { margin-right: 2px; }
.stack { margin: 4px 3px 3px 0; border: 1px solid #000; background: #474747; }
.tools-left .stack .tool { width: 23px; height: 24px; }
.tools-left .short { height: 25px; flex-basis: 25px; }
.tools-right .tool { width: 24px; height: 25px; }
.tools-right hr { margin: 0 0 2px; }
.clip { height: 13px; overflow: hidden; flex: none; }
.scroll { height: 17px; flex: none; display: flex; justify-content: center; align-items: center; }
.tri { width: 10px; height: 10px; fill: #999; display: block; }

.viewport { position: relative; flex: 1; min-width: 0; background: #000; overflow: hidden; }
.canvas { display: block; width: 100%; height: 100%; }
.haze { fill: url(#haze); }
.floor { fill: none; stroke: #3c434e; stroke-width: 1; }
.floor.major { stroke-width: 2; }
.inner, .wire { fill: none; stroke: #50584b; stroke-width: 3; }
.wire { stroke: #92a088; stroke-width: 4; }
.wire.top { stroke: #b9b9a6; stroke-width: 4; fill: #6a6a5e; fill-opacity: .3; }
.selected { fill: #e79a0b; }
.tag.mono { fill: #ee4545; font-size: 11px; font-weight: bold; }
.axis { font-size: 11px; font-weight: bold; }
.cams { position: absolute; top: 5px; right: 6px; display: flex; gap: 5px; }
.pill { display: flex; align-items: center; gap: 3px; height: 20px; padding: 0 5px 1px; border: 1px solid #888; border-radius: 10px; background: #1a1a1a; line-height: 16px; }
.stats { position: absolute; right: 6px; bottom: 4px; text-align: right; color: #9a9a9a; }
.stats strong, .stats span { display: block; }
.stats strong { font-size: 21px; line-height: 28px; color: #a6a6a6; }
.stats span { font-size: 11px; line-height: 16px; margin-bottom: 5px; }
.stats pre { line-height: 15px; }
.stats em { position: absolute; right: 6px; bottom: 5px; font-style: normal; font-size: 11px; line-height: 16px; color: #55551a; }

.hsplit { height: 6px; flex: none; background: #4d4d4d; border-top: 1px solid #777; border-right: 1px solid #000; display: flex; justify-content: center; }
.hsplit svg { width: 70px; height: 6px; fill: #999; }
.dots { fill: none; stroke: #999; stroke-width: 1; stroke-dasharray: 1 1; }
.vsplit { background: #4d4d4d; border-left: 1px solid #222; border-right: 1px solid #000; display: flex; align-items: center; }
.vsplit svg { width: 5px; height: 70px; margin-top: 112px; fill: #999; }
.vsplit.dark { border-left-color: #000; border-right-color: #333; }

/* spreadsheet */
.sheet { flex: none; height: 133px; overflow: hidden; border-right: 1px solid #000; background: #333; }
.tabs { display: flex; align-items: center; height: 19px; background: #2a2a2a; }
.tab { display: flex; align-items: center; gap: 4px; height: 19px; padding-right: 4px; background: #474747; border-right: 1px solid #1a1a1a; font-size: 10px; line-height: 16px; }
.plus { margin-left: 7px; }
.plus svg { display: block; width: 10px; height: 10px; stroke: #ddd; stroke-width: 2; }
.winctl { width: 30px; height: 14px; margin-right: 3px; }
.pathbar { display: flex; align-items: center; height: 34px; background: linear-gradient(#474747, #3c3c3c); }
.pathbar > .tool .ico { width: 16px; height: 16px; }
.pathbar > .tool:last-child .ico { width: 18px; height: 18px; }
.dim { opacity: .35; }
.flip { transform: scaleX(-1); }
.path { flex: 1; display: flex; align-items: center; height: 25px; margin-right: 6px; border: 1px solid #000; background: linear-gradient(#424242, #333); overflow: hidden; padding-left: 5px; }
.path a { display: flex; align-items: center; gap: 4px; line-height: 20px; }
.path .ico { width: 18px; height: 18px; }
.chev { width: 8px; height: 23px; margin: 0 3px 0 7px; fill: none; stroke: #111; stroke-width: 2; }
.drop { width: 18px; height: 23px; background: #303030; display: flex; align-items: center; justify-content: center; }
.drop .caret, .combo .caret { border-top-width: 7px; border-top-color: #888; }
.filter { display: flex; align-items: center; height: 30px; padding-bottom: 1px; border-top: 3px solid #0c0c0c; border-bottom: 1px solid #000; background: #333; line-height: 16px; white-space: nowrap; }
.node { width: 119px; }
.node b { margin-right: 2px; }
.prev, .next { width: 9px; height: 10px; flex: none; fill: #444; }
.next { fill: #888; margin: 0 4px 0 2px; }
.modes { display: flex; margin: 0 4px 0 4px; border: 1px solid #000; }
.modes .tool { width: 20px; height: 20px; background: #474747; border-right: 1px solid #111; }
.modes .tool:last-child { border: 0; width: 18px; }
.modes .tool.active { background: #6484a8; }
.modes .ico, .funnel .ico { width: 16px; height: 16px; }
.filter .field { width: 32px; height: 21px; margin: 0 2px 0 1px; flex: none; }
.funnel { width: 20px; height: 21px; margin-right: 4px; border: 1px solid #000; background: #3b3b3b; }
.combo { position: relative; flex: 1; margin-right: 3px; }
.combo.off { flex: 1.2; }
.combo select { display: block; width: 100%; height: 21px; padding: 0 14px 1px; appearance: none; border: 1px solid #161616; border-radius: 0; background: linear-gradient(90deg, transparent calc(100% - 22px), #303030 0), linear-gradient(#525252, #3e3e3e); }
.combo.off select { background: #353535; color: #6f6f6f; opacity: 1; border-color: #2a2a2a; }
.combo .caret { position: absolute; right: 7px; top: 7px; }
.combo.off .caret { border-top-color: #505050; }
.grid { display: flex; }
table { flex: 1; width: 100%; border-collapse: separate; border-spacing: 0; table-layout: fixed; background: #333; }
th, td { text-align: left; font-weight: normal; padding: 0 0 0 3px; height: 18px; line-height: 16px; border-left: 1px solid #1c1c1c; white-space: nowrap; }
thead th { width: 14.5%; height: 17px; line-height: 15px; background: linear-gradient(#3c3c3c, #262626); border-color: #000; border-top: 1px solid #000; font-size: 11px; }
thead .index { width: 14%; }
thead .last { width: auto; }
tbody th { background: linear-gradient(#303030, #262626); border-bottom: 1px solid #000; padding: 0; border-left: 0; }
tbody tr:nth-child(2) { background: #3c3c3c; }
.bar { width: 15px; background: #262626; flex: none; border-left: 1px solid #000; }
.bar svg { display: block; width: 13px; height: 22px; background: linear-gradient(#666, #444); stroke: #0a0a0a; stroke-width: 3; stroke-dasharray: 2 1; }

/* network editor */
.network { display: flex; flex-direction: column; min-width: 0; min-height: 0; background: #303030; }
.menu-bar { display: flex; align-items: center; height: 23px; flex: none; padding-bottom: 2px; background: linear-gradient(#383838, #323232); border-bottom: 1px solid #000; }
.handle { width: 10px; height: 22px; background: #3a3a3a; border-right: 1px solid #111; }
.menu-bar nav { display: flex; gap: 14px; padding-left: 8px; }
.menu-bar nav button { font-size: 12px; line-height: 18px; }
.icons { display: flex; margin-left: 17px; }
.menu-bar .tool { width: 24px; height: 22px; }
.menu-bar .ico { width: 18px; height: 18px; }
.graph { position: relative; flex: 1; min-height: 0; overflow: hidden; }
.block { fill: #3d342b; stroke: #b45f06; stroke-width: 1; }
.link { fill: none; stroke: #5585bf; stroke-width: 1; }
.link.sel { stroke: #8faa6a; }
.link.dash { stroke: #a3ad7c; stroke-dasharray: 2 2; }
.face { fill: #ccc; }
.edge { stroke: #aaa; }
.end { fill: #c06600; }
.port { fill: #b4b4b4; }
.rib { fill: none; stroke: #8a8a8a; }
.rib.dark { stroke: #6e3c04; }
.picked { fill: #f5c800; stroke: #f5c800; stroke-width: 2; }
.inset { fill: #ccc; stroke: #1c1c1c; stroke-width: 1; }
.mark { font-size: 20px; fill: #50473d; }
.name { font-size: 28px; fill: #ccc; }
.kind { font-size: 24px; fill: #666; }
.info { font-size: 24px; fill: #70a0dd; }
.context { position: absolute; top: 13px; right: 12px; font-size: 23px; line-height: 30px; font-weight: bold; color: #505050; }

/* parameters */
.params { background: #3a3a3a; min-width: 0; overflow: hidden; }
.params header { display: flex; align-items: center; height: 25px; gap: 4px; padding: 0 0 1px 6px; border-bottom: 1px solid #000; }
.params header .ico { width: 18px; height: 18px; }
h2 { font-size: 11px; line-height: 16px; white-space: nowrap; }
.params header .field { flex: 1; min-width: 0; }
.field { height: 22px; padding: 0 3px; border: 1px solid #2a2a2a; border-radius: 0; background: #131313; color: #d0d0d0; outline: 0; }
.params .row { display: grid; grid-template-columns: 18px 101px minmax(0, 1fr); align-items: center; column-gap: 1px; height: 26px; padding-left: 20px; }
.row > label { grid-column: 2; text-align: right; line-height: 16px; white-space: nowrap; }
.row > .field, .row > .pick { grid-column: 3; margin-left: 14px; }
.params .tick { display: flex; gap: 6px; height: 20px; padding-left: 155px; }
.params .tick + .row { height: 25px; }
.params .tick:last-child { height: 22px; }
.row .changed { font-weight: bold; }
.row input.changed { color: #fff; }
.check { appearance: none; width: 14px; height: 14px; margin: 0; border: 1px solid #2a2a2a; background: #131313; flex: none; display: grid; }
.check:checked::before { content: ""; width: 12px; height: 12px; background: #eee; clip-path: polygon(8% 50%, 30% 50%, 42% 68%, 90% 0, 100% 12%, 50% 100%, 34% 100%); }
.off label { color: #777; }
.off .field { background: #303030; border-color: #353535; color: #505050; }
.pick { position: relative; width: 94px; }
.pick.long { width: 140px; }
.pick select { display: block; width: 100%; height: 22px; padding: 0 14px 1px; appearance: none; border: 1px solid #1c1c1c; border-radius: 1px; background: linear-gradient(90deg, transparent calc(100% - 22px), #303030 0), linear-gradient(#545454, #404040); }
.spin { position: absolute; right: 6px; top: 4px; width: 8px; height: 15px; fill: #8a8a8a; pointer-events: none; }
```
FILE: scene.js
```js
// Perspective floor: two line families, each converging on a point of the horizon.
const horizon = 369.3;
const base = 570;
const bottom = 2400;

function line(vanishX, baseX) {
  const t = (bottom - horizon) / (base - horizon);
  return `M${vanishX} ${horizon}L${vanishX + (baseX - vanishX) * t} ${bottom}`;
}

let minor = "";
let major = "";
for (let k = -90; k <= 10; k++) {
  const d = line(861, 28 + 212 * k);
  if ((k + 1) % 10 === 0) major += d; else minor += d;
}
for (let k = -10; k <= 90; k++) {
  const d = line(-123, -9 + 183.500 * k);
  if ((k - 4) % 10 === 0) major += d; else minor += d;
}
document.getElementById("floor").setAttribute("d", minor);
document.getElementById("floor-major").setAttribute("d", major);

// Selected points
const points = [
  [174, 460], [203, 458], [197, 466], [200, 487], [251, 450], [117, 509], [176, 542],
  [294, 440], [330, 452], [354, 453], [368, 455], [313, 475], [279, 509], [308, 501],
  [418, 433], [425, 434], [464, 442], [487, 446], [515, 450], [479, 461], [420, 475], [439, 470]
];
document.getElementById("selected").innerHTML =
  points.map(([x, y]) => `<circle cx="${x}" cy="${y}" r="1.8"/>`).join("");
```
